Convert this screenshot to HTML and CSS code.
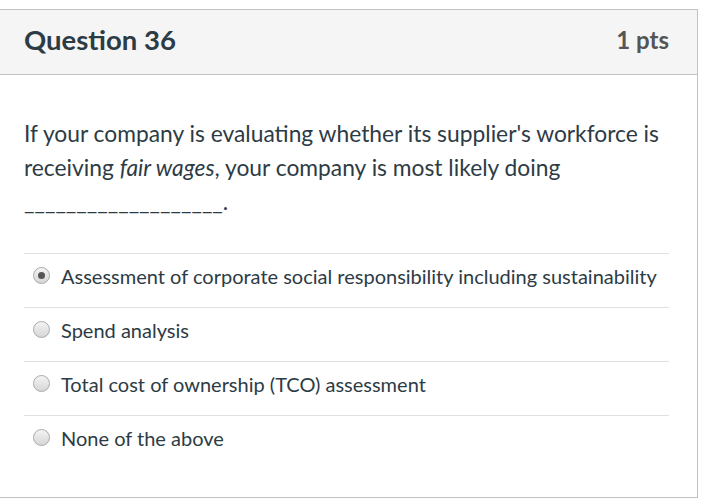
FILE: index.html
```html
<!DOCTYPE html>
<html>
<head>
<meta charset="utf-8">
<link rel="stylesheet" href="styles.css">
</head>
<body>
<div class="quiz">
  <div class="header">
    <h2 class="title">Question 36</h2>
    <span class="pts">1 pts</span>
  </div>
  <div class="body">
    <p class="question">If your company is evaluating whether its supplier's workforce is receiving <em>fair wages</em>, your company is most likely doing ___________________.</p>
    <div class="answers">
      <label class="answer"><span class="radio checked"></span><span>Assessment of corporate social responsibility including sustainability</span></label>
      <label class="answer"><span class="radio"></span><span>Spend analysis</span></label>
      <label class="answer"><span class="radio"></span><span>Total cost of ownership (TCO) assessment</span></label>
      <label class="answer"><span class="radio"></span><span>None of the above</span></label>
    </div>
  </div>
</div>
</body>
</html>
```
FILE: styles.css
```css
* { box-sizing: border-box; }
body {
  margin: 0;
  background: #fff;
  font-family: Lato, "Noto Sans", sans-serif;
  color: #2d3b45;
}
.quiz {
  margin-top: 9px;
  width: 698px;
  border: 1px solid #c2c2c2;
  border-left: none;
}
.header {
  height: 65px;
  background: #f5f5f5;
  border-bottom: 1px solid #c2c2c2;
  display: flex;
  align-items: center;
  justify-content: space-between;
  padding: 0 28px 5px 24px;
}
.title {
  margin: 0;
  font-size: 27.5px;
  font-weight: 700;
  color: #2d3b45;
}
.pts {
  font-size: 24px;
  font-weight: 700;
  color: #555;
}
.body {
  padding: 41px 28px 28px 24px;
}
.question {
  margin: 0 0 35px;
  font-size: 22.8px;
  line-height: 34px;
}
.answers {
  display: flex;
  flex-direction: column;
}
.answer {
  display: flex;
  align-items: center;
  gap: 11px;
  height: 54px;
  border-top: 1px solid #dde1e4;
  padding: 0 0 10px 9px;
  font-size: 20px;
}
.radio {
  width: 17px;
  height: 17px;
  border-radius: 50%;
  border: 1px solid #a9a9a9;
  background: linear-gradient(#f4f4f4, #d6d6d6);
  display: flex;
  align-items: center;
  justify-content: center;
  flex: none;
}
.radio.checked::after {
  content: "";
  width: 7px;
  height: 7px;
  border-radius: 50%;
  background: #555;
}
```
